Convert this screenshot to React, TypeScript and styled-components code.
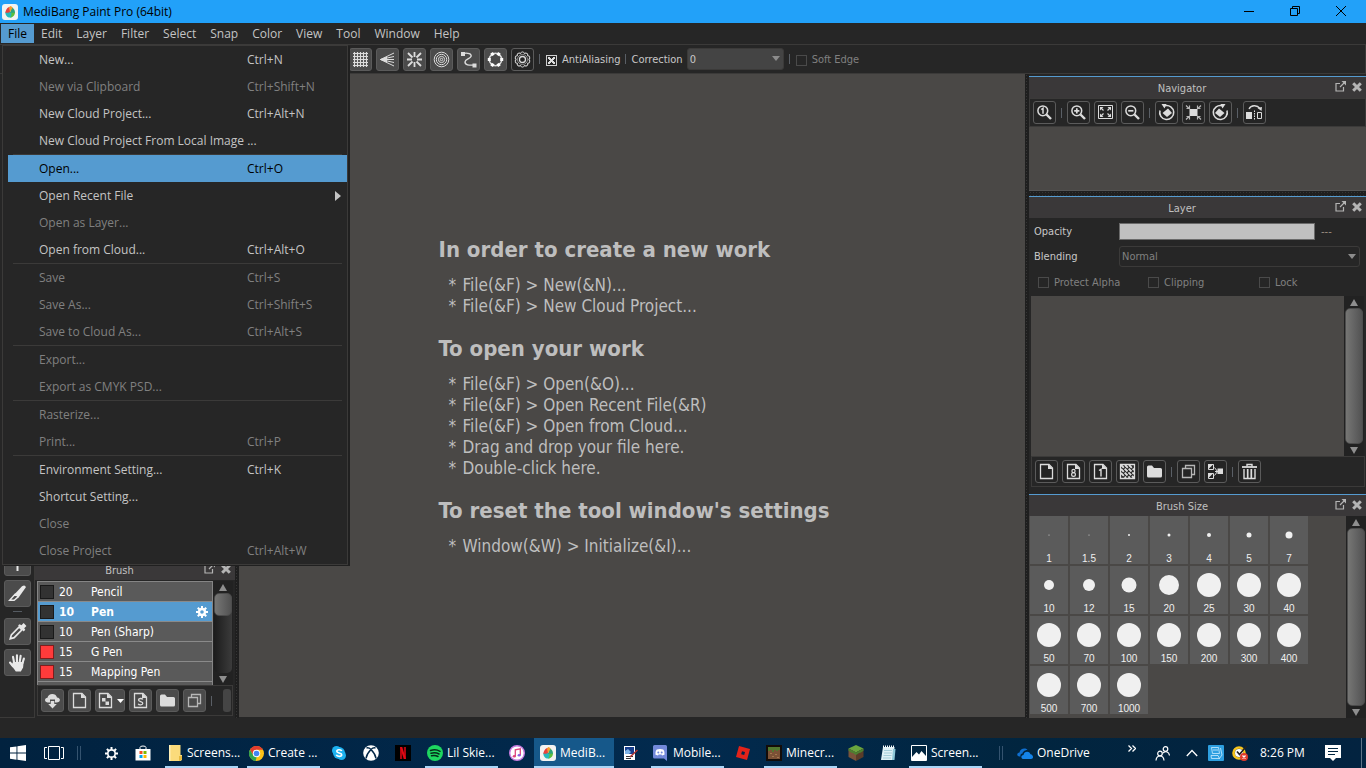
import React from "react";
import styled, { createGlobalStyle, css } from "styled-components";

const UI = `"Open Sans", "Noto Sans", sans-serif`;
const TAHOMA = `"DejaVu Sans Condensed", "DejaVu Sans", sans-serif`;
const BG = "#262626";
const CANVAS = "#4a4846";
const LINE = "#3b3a39";
const BLUE = "#559bd0";

const Global = createGlobalStyle`
  *, *::before, *::after { box-sizing: border-box; }
  html, body, #root { height: 100%; }
  body { margin: 0; overflow: hidden; background: ${BG}; color: #c4c4c4; font: 12px/16px ${UI}; }
  button { font: inherit; color: inherit; margin: 0; padding: 0; border: 0; background: none; white-space: nowrap; }
  svg { display: block; flex: none; }
  ul, h1, h2 { margin: 0; padding: 0; list-style: none; }
`;

const Screen = styled.div`
  display: flex;
  flex-direction: column;
  height: 100vh;
`;

/* ---------- title bar ---------- */
const TitleBar = styled.header`
  display: flex;
  align-items: center;
  height: 23px;
  padding: 0 2px;
  background: #22a1f9;
  color: #000;
`;
const Title = styled.h1`
  flex: 1;
  margin-left: 5px;
  font-size: 12px;
  font-weight: 400;
`;
const WindowButton = styled.button`
  display: grid;
  place-items: center;
  width: 46px;
  height: 21px;
  padding-bottom: 1px;
`;

/* ---------- menu ---------- */
const MenuBar = styled.nav`
  position: relative;
  display: flex;
  height: 21px;
  padding: 1px 0 1px 1px;
`;
const MenuTitle = styled.button<{ $open?: boolean }>`
  height: 19px;
  padding: 0 7px;
  background: ${(p) => (p.$open ? BLUE : "transparent")};
  color: ${(p) => (p.$open ? "#000" : "#c4c4c4")};
`;
const MenuPanel = styled.div`
  position: absolute;
  z-index: 5;
  top: 22px;
  left: 2px;
  width: 346px;
  padding: 0 0 0 5px;
  border: 1px solid ${LINE};
  background: ${BG};
  box-shadow: 2px 1px 0 #202020;
`;
const MenuRow = styled.button<{ $active?: boolean }>`
  display: grid;
  grid-template-columns: 208px 1fr 12px;
  align-items: center;
  width: 100%;
  height: 27px;
  padding: 0 0 0 31px;
  text-align: left;
  color: #c4c4c4;
  &:disabled { color: #808080; }
  ${(p) => p.$active && css`background: ${BLUE}; color: #000;`}
`;
const MenuRule = styled.hr`
  height: 1px;
  margin: 0 5px;
  border: 0;
  background: ${LINE};
`;

/* ---------- toolbars ---------- */
const ToolStrip = styled.div<{ $offset?: boolean; $height?: number }>`
  display: flex;
  align-items: center;
  gap: 4px;
  height: ${(p) => p.$height ?? 30}px;
  padding-left: ${(p) => (p.$offset ? 349 : 3)}px;
  border: 1px solid ${LINE};
  border-left-width: ${(p) => (p.$offset ? 0 : 1)}px;
  overflow: hidden;
  font: 11px/14px ${TAHOMA};
  label { padding-top: 2px; color: #c8c8c8; }
`;
const IconButton = styled.button<{ $filled?: boolean; $wide?: boolean }>`
  display: flex;
  align-items: center;
  justify-content: center;
  gap: 3px;
  flex: none;
  width: ${(p) => (p.$wide ? 30 : 23)}px;
  height: 23px;
  border: 1px solid #5b5b5b;
  border-radius: 3px;
  background: ${(p) => (p.$filled ? "#4b4b4b" : "#242424")};
  color: #dcdcdc;
`;
const Divider = styled.span`
  flex: none;
  width: 3px;
  height: 10px;
  background: linear-gradient(90deg, transparent 1px, #5a5f66 1px, #5a5f66 2px, transparent 2px);
`;
const StripHandle = styled.span`
  width: 8px;
  height: 23px;
  margin: 0 1px 0 auto;
  border-radius: 3px;
  background: #454545;
`;
const Check = styled.label<{ $muted?: boolean }>`
  display: flex;
  align-items: center;
  gap: 5px;
  margin-left: 1px;
  && { color: ${(p) => (p.$muted ? "#808080" : "#c8c8c8")}; }
  font: 11px/14px ${TAHOMA};
  white-space: nowrap;
  input {
    appearance: none;
    flex: none;
    width: 11px;
    height: 11px;
    margin: 0;
    border: 1px solid #4a4a4a;
  }
  input:checked {
    border-color: #d0d0d0;
    background:
      linear-gradient(45deg, transparent 42%, #ddd 42%, #ddd 58%, transparent 58%) center / 7px 7px no-repeat,
      linear-gradient(-45deg, transparent 42%, #ddd 42%, #ddd 58%, transparent 58%) center / 7px 7px no-repeat;
  }
`;
const SelectBox = styled.div<{ $filled?: boolean }>`
  position: relative;
  flex: ${(p) => (p.$filled ? "0 0 97px" : "1")};
  select {
    appearance: none;
    display: block;
    width: 100%;
    height: ${(p) => (p.$filled ? 22 : 21)}px;
    padding: 1px 2px 0;
    border: 1px solid ${LINE};
    border-radius: 3px;
    background: ${(p) => (p.$filled ? "#444" : BG)};
    color: ${(p) => (p.$filled ? "#c8c8c8" : "#808080")};
    opacity: 1;
    font: 11px/14px ${TAHOMA};
  }
  svg { position: absolute; right: 4px; top: 8px; pointer-events: none; }
`;

/* ---------- workspace ---------- */
const Workspace = styled.div`
  display: flex;
  flex: 1;
  min-height: 0;
`;
const ToolColumn = styled.div`
  display: flex;
  flex-direction: column;
  align-items: center;
  justify-content: flex-end;
  gap: 4px;
  width: 35px;
  padding-bottom: 41px;
  border-right: 1px solid ${LINE};
  border-bottom: 1px solid ${LINE};
`;
const ToolButton = styled.button`
  display: grid;
  place-items: center;
  width: 27px;
  height: 27px;
  border: 1px solid #5b5b5b;
  border-radius: 3px;
  background: #4b4b4b;
  color: #e8e8e8;
`;
const ToolRule = styled.span`
  width: 9px;
  height: 3px;
  border-top: 1px solid #555b62;
`;
const BrushPanel = styled.section`
  display: flex;
  flex-direction: column;
  justify-content: flex-end;
  width: 200px;
`;
const BrushBody = styled.div`
  padding: 1px 2px 2px;
`;
const Splitter = styled.div<{ $horizontal?: boolean }>`
  flex: none;
  width: ${(p) => (p.$horizontal ? "auto" : "4px")};
  height: ${(p) => (p.$horizontal ? "5px" : "auto")};
  background: radial-gradient(circle, #353535 1px, #1f1f1f 1px) 0 0 / 3px 3px;
`;
const PanelHeader = styled.div<{ $accent?: boolean }>`
  display: grid;
  grid-template-columns: 1fr 31px;
  flex: none;
  height: 22px;
  border-top: 1px solid ${(p) => (p.$accent ? BLUE : LINE)};
  background: #3a3839;
  h2 { padding-top: 5px; text-align: center; font: 11px/14px ${TAHOMA}; color: #c0c0c0; }
`;
const HeaderActions = styled.div`
  display: flex;
  gap: 6px;
  height: 19px;
  color: #b4b4b4;
`;
const BrushArea = styled.div`
  display: flex;
  height: 104px;
`;
const BrushList = styled.ul`
  flex: 1;
  overflow: hidden;
  border: 1px solid #858585;
  border-bottom: 0;
`;
const BrushRow = styled.button<{ $active?: boolean }>`
  display: grid;
  grid-template-columns: 14px 27px 1fr 14px;
  align-items: center;
  column-gap: 5px;
  width: 100%;
  height: 20px;
  padding: 0 2px;
  border-bottom: 1px solid #8a8a8a;
  background: ${(p) => (p.$active ? BLUE : "#5a5a5a")};
  color: #fff;
  text-align: left;
  font: ${(p) => (p.$active ? 700 : 400)} 12px/16px ${TAHOMA};
`;
const Swatch = styled.i<{ $color: string }>`
  width: 14px;
  height: 14px;
  border: 1px solid rgba(0, 0, 0, 0.5);
  background: ${(p) => p.$color};
`;

const CanvasArea = styled.main`
  display: flex;
  align-items: center;
  justify-content: center;
  flex: 1;
  min-width: 0;
  margin-bottom: 1px;
  padding: 2px 0 0 4px;
  background: ${CANVAS};
  color: #bebebe;
  font-family: ${TAHOMA};
`;
const HelpBlock = styled.section`
  & + & { margin-top: 18px; }
  h2 { font-size: 22px; line-height: 28px; margin-bottom: 11px; }
  li { display: grid; grid-template-columns: 14px 1fr; padding-left: 10px; font-size: 17px; line-height: 21px; }
`;

const RightDock = styled.aside`
  display: flex;
  flex-direction: column;
  width: 337px;
  padding-top: 2px;
`;
const NavigatorView = styled.div`
  flex: 0 0 64px;
  border-bottom: 1px solid #555;
  background: ${CANVAS};
`;
const LayerPanel = styled.section`
  display: flex;
  flex-direction: column;
  flex: 1;
  min-height: 0;
`;
const Field = styled.div`
  display: flex;
  align-items: center;
  height: 25px;
  padding: 0 6px 0 5px;
  font: 11px/14px ${TAHOMA};
  label { width: 85px; color: #c8c8c8; }
`;
const LayerFields = styled.div`
  padding-top: 1px;
`;
const OpacityBar = styled.input`
  appearance: none;
  flex: 0 1 196px;
  min-width: 0;
  height: 17px;
  margin: 0 6px 0 0;
  border: 1px solid #6a6a6a;
  background: #c0c0c0;
  &::-webkit-slider-thumb { appearance: none; width: 0; height: 15px; }
`;
const Dashes = styled.span`
  color: #9d8f82;
`;
const CheckRow = styled.div`
  display: grid;
  grid-template-columns: 110px 111px 1fr;
  height: 27px;
  padding-left: 8px;
`;
const LayerListArea = styled.div`
  display: flex;
  flex: 1;
  min-height: 0;
  margin: 0 2px;
`;
const LayerList = styled.div`
  flex: 1;
  background: ${CANVAS};
`;
const LayerTools = styled.div`
  margin: 0 1px 7px 2px;
`;
const SizeArea = styled.div`
  display: flex;
  height: 202px;
`;
const SizeGrid = styled.div`
  display: grid;
  grid-template-columns: repeat(auto-fill, 38px);
  grid-auto-rows: 48px;
  align-content: start;
  gap: 2px;
  flex: 1;
  padding: 0 36px 0 1px;
  background: ${CANVAS};
`;
const SizeCell = styled.button`
  display: grid;
  grid-template-rows: 38px 10px;
  justify-items: center;
  align-items: center;
  background: #5b5b5b;
  color: #f0f0f0;
  font: 10px/10px "Liberation Sans", sans-serif;
  span { align-self: end; }
`;

/* ---------- scroll bar ---------- */
const ScrollTrack = styled.div`
  display: flex;
  flex-direction: column;
  align-items: center;
  flex: none;
  width: 20px;
  background: #222;
  color: #8f8f8f;
`;
const ScrollSlot = styled.div`
  flex: 1;
  width: 18px;
  border-radius: 5px;
  background: linear-gradient(90deg, #1c1c1c, #3b3b3b);
`;
const ScrollThumb = styled.div<{ $short?: boolean }>`
  height: ${(p) => (p.$short ? "23px" : "100%")};
  border: 1px solid #4c4c4c;
  border-radius: 5px;
  background: linear-gradient(90deg, #767674, #646464 50%, #525252);
`;
const ScrollEnd = styled.button`
  display: grid;
  place-items: center;
  width: 20px;
  height: 12px;
`;

/* ---------- bottom ---------- */
const StatusBar = styled.footer`
  height: 20px;
`;
const TaskBar = styled.footer`
  display: flex;
  align-items: stretch;
  height: 30px;
  background: linear-gradient(90deg, #01223f, #022a4e 50%, #01253f 75%, #032340);
  color: #fff;
`;
const TaskIcon = styled.button<{ $width?: number; $raised?: boolean }>`
  display: grid;
  place-items: center;
  flex: none;
  width: ${(p) => p.$width ?? 32}px;
  padding-bottom: ${(p) => (p.$raised ? 10 : 0)}px;
`;
const TaskApp = styled.button<{ $active?: boolean; $gap?: number }>`
  display: flex;
  align-items: center;
  gap: 4px;
  flex: none;
  width: 80px;
  margin-left: ${(p) => p.$gap ?? 1}px;
  padding: 0 0 0 6px;
  background: ${(p) => (p.$active ? "#16588a" : "transparent")};
  background-image: linear-gradient(#a9d5f7, #a9d5f7);
  background-repeat: no-repeat;
  background-size: ${(p) => (p.$active ? "100%" : "73px")} 2px;
  background-position: 50% 100%;
  overflow: hidden;
`;
const TaskDivider = styled.span<{ $before: number; $after: number }>`
  flex: none;
  align-self: center;
  width: 4px;
  height: 14px;
  margin: 0 ${(p) => p.$after}px 0 ${(p) => p.$before}px;
  border: solid #34536f;
  border-width: 0 1px;
`;
const OneDrive = styled.button`
  display: flex;
  align-items: center;
  gap: 4px;
`;
const Tray = styled.div`
  display: flex;
  margin-left: auto;
`;
const Clock = styled.time`
  align-self: center;
  width: 53px;
  padding-left: 8px;
  white-space: nowrap;
`;
const ShowDesktop = styled.button`
  width: 5px;
  border-left: 1px solid #5d7387;
`;

/* ---------- icons ---------- */
type G = { children: React.ReactNode; s?: number; vb?: number };
const Ico = ({ children, s = 17, vb = 17 }: G) => (
  <svg width={s} height={s} viewBox={`0 0 ${vb} ${vb}`} fill="none" stroke="currentColor" aria-hidden="true">
    {children}
  </svg>
);
const GridIcon = () => (
  <Ico><path strokeWidth="1.200" d="M2.500 1v15M5.500 1v15M8.500 1v15M11.500 1v15M14.500 1v15M1 2.500h15M1 5.500h15M1 8.500h15M1 11.500h15M1 14.500h15" /></Ico>
);
const VanishIcon = () => (
  <Ico><path d="M1.500 8.500L15 2M1.500 8.500L15 5.500M1.500 8.500H15M1.500 8.500L15 11.500M1.500 8.500L15 15" /><path fill="currentColor" stroke="none" d="M1 8.500l7-3v6z" /></Ico>
);
const RadialIcon = () => (
  <Ico><path strokeWidth="1.800" d="M8.500 1v5M8.500 11v5M1 8.500h5M11 8.500h5M2 2l4.500 4.500M10.500 10.500L15 15M15 2l-4.500 4.500M6.500 10.500L2 15" /></Ico>
);
const RingsIcon = () => (
  <Ico><circle cx="8.5" cy="8.5" r="7.3" /><circle cx="8.5" cy="8.5" r="5.2" /><circle cx="8.5" cy="8.5" r="3.1" /><circle cx="8.5" cy="8.5" r="1.2" /></Ico>
);
const CurveIcon = () => (
  <Ico><path strokeWidth="1.400" d="M3 2.500c5-1 9 .5 8 3S5 8 5 11s4 3.500 9 3" /><path fill="currentColor" stroke="none" d="M1 1h4v4H1zM12.500 12.500h4v4h-4z" /></Ico>
);
const NodesIcon = () => (
  <Ico>
    <circle cx="8.5" cy="8.5" r="6.2" strokeWidth="1.500" />
    {[30, 90, 150, 210, 270, 330].map((a) => (
      <rect key={a} x="7" y="0.8" width="3" height="3" fill="#fff" stroke="none" transform={`rotate(${a} 8.5 8.5)`} />
    ))}
  </Ico>
);
const CogOutline = () => (
  <Ico>
    {[0, 36, 72, 108, 144, 180, 216, 252, 288, 324].map((a) => (
      <path key={a} d="M6.600 2.600C6.800.4 10.200.4 10.400 2.600" transform={`rotate(${a} 8.500 8.500)`} />
    ))}
    <circle cx="8.5" cy="8.5" r="5" stroke="#8f8f8f" /><circle cx="8.5" cy="8.5" r="3" strokeWidth="1.300" />
  </Ico>
);
const Lens = ({ kind }: { kind: "1" | "+" | "-" }) => (
  <Ico>
    <circle cx="6.800" cy="6.800" r="4.900" strokeWidth="1.500" />
    <path strokeWidth="2.400" d="M10.500 10.500l4.500 4.500" />
    {kind === "1" ? <path strokeWidth="1.500" d="M5.300 5.600l1.700-1.300v5.400" /> : <path strokeWidth="1.700" d={kind === "+" ? "M4.200 6.800h5.200M6.800 4.200v5.200" : "M4.200 6.800h5.200"} />}
  </Ico>
);
const FitIcon = () => (
  <Ico><path d="M1.500 1.500h14v13h-14z" /><path fill="currentColor" stroke="none" d="M3 3h3.500L3 6.500zM14 3v3.500L10.500 3zM3 13V9.500L6.500 13zM14 13h-3.500L14 9.500z" /><path strokeWidth="1.200" d="M4 4l2.500 2.500M13 4l-2.500 2.500M4 12l2.500-2.500M13 12l-2.500-2.500" /></Ico>
);
const RotateIcon = ({ flip }: { flip?: boolean }) => (
  <Ico>
    <g transform={flip ? "matrix(-1 0 0 1 17 0)" : undefined}>
      <path strokeWidth="1.600" d="M2 6.500a7 7 0 1 0 5-4.800" />
      <path fill="currentColor" stroke="none" d="M8.500 0L3.500 0 6.500 4.500zM10 4.500l4 4.500-5 4-4.500-4z" />
    </g>
  </Ico>
);
const ResetIcon = () => (
  <Ico><path fill="currentColor" stroke="none" d="M4.500 5h8v7h-8z" /><path strokeWidth="1.200" stroke="#b8b8b8" d="M1 1.500l3 3M16 1.500l-3 3M1 15.500l3-3M16 15.500l-3-3M1.500 4.500h3v-3M12.500 1.500v3h3M1.500 12.500h3v3M12.500 15.500v-3h3" /></Ico>
);
const FlipIcon = () => (
  <Ico><path fill="currentColor" stroke="none" d="M0 8h6v7H0zM11.500 4l4.500-1-.5 4z" /><path d="M11.500 8.500h4v6h-4z" /><path strokeDasharray="1.500 1" d="M8.500 6.500V16" /><path strokeWidth="1.300" d="M3 5C5 1 11 .500 14 4.500" /></Ico>
);
const PageIcon = ({ mark }: { mark?: "8" | "1" | "S" | "check" }) => (
  <Ico>
    <path strokeWidth="1.300" d="M2.500 1.500h8.500l3.500 3.500v10.500h-12z" />
    <path fill="currentColor" stroke="none" d="M10 1l5 5h-5z" />
    {mark === "8" && <><circle cx="8.500" cy="8" r="1.600" strokeWidth="1.200" /><circle cx="8.500" cy="11.500" r="1.900" strokeWidth="1.200" /></>}
    {mark === "1" && <path strokeWidth="1.400" d="M7 7.500L9 6.300V13.500" />}
    {mark === "S" && <path strokeWidth="1.300" d="M10.800 7.500C10 6 6.400 6.200 6.500 8s4.400 1.300 4.300 3.200S7 13.500 6.200 11.700" />}
    {mark === "check" && <path fill="currentColor" stroke="none" d="M5 6h3.500v3.500H5zM8.500 9.500H12V13H8.500z" />}
  </Ico>
);
const HatchIcon = () => (
  <Ico>
    <path strokeWidth="1.300" d="M1.500 1.500h14v14h-14z" />
    <path strokeWidth="1.900" strokeDasharray="4 1.200" d="M2 6l9 9M2 2l13 13M6 2l9 9M10 2l5 5M2 10l5 5" />
  </Ico>
);
const FolderIcon = () => (
  <Ico><path fill="currentColor" stroke="none" d="M1 4q0-1.500 1.500-1.500H6L8 5h6.500Q16 5 16 6.500V13q0 1.500-1.500 1.500h-12Q1 14.500 1 13z" /></Ico>
);
const CopyIcon = () => (
  <Ico><path strokeWidth="1.300" stroke="#b6b6b6" d="M2.500 5.500h9v9h-9zM5.500 5V2.500h9v9H12" /></Ico>
);
const MergeIcon = () => (
  <Ico><path fill="currentColor" stroke="none" d="M10.500 5.500H16v5.500h-5.500zM1 1h5.500L1 6.500zM1 10h5.500L1 15.500z" /><path d="M1.500 1.500h5v5h-5zM1.500 10.500h5v5h-5zM7.500 4.500l3 4-3 4M8 8.500h3" /></Ico>
);
const TrashIcon = () => (
  <Ico><path strokeWidth="1.800" d="M1 4h15" /><path strokeWidth="1.400" d="M6 3.500v-2h5v2M3 6v9.500h11V6" /><path strokeWidth="1.700" d="M6.700 6v9M10.300 6v9" /></Ico>
);
const CloudDown = () => (
  <Ico><path fill="currentColor" stroke="none" d="M3.500 10.500C0 10 .5 5.800 3.500 5.800 4 1 12 .5 13 5.500c4 .3 4 5-.5 5H11V7.500H6v3zM6.700 9h3.600v3h2.500l-4.300 4.500L4.200 12h2.500z" /></Ico>
);
const Tri = ({ up }: { up?: boolean }) => (
  <svg width="8" height="7" viewBox="0 0 8 7" fill="currentColor" aria-hidden="true">
    <path d={up ? "M4 0l4 7H0z" : "M0 0h8L4 7z"} />
  </svg>
);
const DropTri = () => (
  <svg width="8" height="5" viewBox="0 0 8 5" fill="#8c8c8c" aria-hidden="true"><path d="M0 0h8L4 5z" /></svg>
);
const PopOut = () => (
  <Ico s={11} vb={11}><path strokeWidth="1.200" d="M5 2.500H1v7.500h7.500V6M5 6l4.500-4.500" /><path fill="currentColor" stroke="none" d="M6.500 0H11v4.500z" /></Ico>
);
const CloseX = () => (
  <Ico s={10} vb={10}><path strokeWidth="3" d="M1.200 1.200l7.600 7.600M8.800 1.200L1.200 8.800" /></Ico>
);
const MediLogo = ({ s }: { s: number }) => (
  <svg width={s} height={s} viewBox="0 0 16 16" aria-hidden="true">
    <rect width="16" height="16" rx="3" fill="#f3f3f1" />
    <path fill="#24b9bd" d="M3.300 8C3.300 11.500 5.200 13.500 8 13.500s3-2 3-3.500L7 7z" />
    <path fill="#5cbf3a" d="M13 8c0 3.200-2 5.500-5 5.500 2-1.500 1.500-4 1-5.500z" />
    <path fill="#2ca47c" d="M9.500 3C11.500 4 13 6 13 8.500L8 9z" />
    <path fill="#e7423f" d="M3.300 8.500C3.800 7 4.500 3.800 7 3l1.500.5L8 8C6 9 4.300 9 3.300 8.500z" />
    <path fill="#f6a02d" d="M8 2c1.500.3 2.500 1 2.500 2L8 8 7 4z" />
  </svg>
);
const BrushGear = () => (
  <Ico s={12} vb={12}>
    <circle cx="6" cy="6" r="3" strokeWidth="2.400" stroke="#fff" />
    {[0, 45, 90, 135].map((a) => <path key={a} stroke="#fff" strokeWidth="2" d="M6 0v2.500M6 9.500V12" transform={`rotate(${a} 6 6)`} />)}
  </Ico>
);

/* ---------- data ---------- */
const menus = ["File", "Edit", "Layer", "Filter", "Select", "Snap", "Color", "View", "Tool", "Window", "Help"];
type Entry = { label: string; keys?: string; off?: boolean; active?: boolean; sub?: boolean };
const fileMenu: Entry[][] = [
  [
    { label: "New...", keys: "Ctrl+N" },
    { label: "New via Clipboard", keys: "Ctrl+Shift+N", off: true },
    { label: "New Cloud Project...", keys: "Ctrl+Alt+N" },
    { label: "New Cloud Project From Local Image ..." },
  ],
  [
    { label: "Open...", keys: "Ctrl+O", active: true },
    { label: "Open Recent File", sub: true },
    { label: "Open as Layer...", off: true },
    { label: "Open from Cloud...", keys: "Ctrl+Alt+O" },
  ],
  [
    { label: "Save", keys: "Ctrl+S", off: true },
    { label: "Save As...", keys: "Ctrl+Shift+S", off: true },
    { label: "Save to Cloud As...", keys: "Ctrl+Alt+S", off: true },
  ],
  [{ label: "Export...", off: true }, { label: "Export as CMYK PSD...", off: true }],
  [{ label: "Rasterize...", off: true }, { label: "Print...", keys: "Ctrl+P", off: true }],
  [
    { label: "Environment Setting...", keys: "Ctrl+K" },
    { label: "Shortcut Setting..." },
    { label: "Close", off: true },
    { label: "Close Project", keys: "Ctrl+Alt+W", off: true },
  ],
];
const brushes = [
  { size: 20, name: "Pencil", color: "#323232" },
  { size: 10, name: "Pen", color: "#323232", active: true },
  { size: 10, name: "Pen (Sharp)", color: "#323232" },
  { size: 15, name: "G Pen", color: "#ff3b3b" },
  { size: 15, name: "Mapping Pen", color: "#ff3b3b" },
  { size: 15, name: "", color: "#0a6a0a" },
];
const sizes: [string, number][] = [
  ["1", 1], ["1.5", 1], ["2", 2], ["3", 3], ["4", 4], ["5", 5], ["7", 7],
  ["10", 10], ["12", 12], ["15", 15], ["20", 20], ["25", 24], ["30", 24], ["40", 24],
  ["50", 24], ["70", 24], ["100", 24], ["150", 24], ["200", 24], ["300", 24], ["400", 24],
  ["500", 24], ["700", 24], ["1000", 24],
];
const help = [
  { title: "In order to create a new work", lines: ["File(&F) > New(&N)...", "File(&F) > New Cloud Project..."] },
  {
    title: "To open your work",
    lines: ["File(&F) > Open(&O)...", "File(&F) > Open Recent File(&R)", "File(&F) > Open from Cloud...", "Drag and drop your file here.", "Double-click here."],
  },
  { title: "To reset the tool window's settings", lines: ["Window(&W) > Initialize(&I)..."] },
];

/* ---------- pieces ---------- */
const Header = ({ title, accent }: { title: string; accent?: boolean }) => (
  <PanelHeader $accent={accent}>
    <h2>{title}</h2>
    <HeaderActions>
      <button aria-label={`Float ${title}`}><PopOut /></button>
      <button aria-label={`Close ${title}`}><CloseX /></button>
    </HeaderActions>
  </PanelHeader>
);
const Scroll = ({ short }: { short?: boolean }) => (
  <ScrollTrack>
    <ScrollEnd aria-label="Scroll up"><Tri up /></ScrollEnd>
    <ScrollSlot><ScrollThumb $short={short} /></ScrollSlot>
    <ScrollEnd aria-label="Scroll down"><Tri /></ScrollEnd>
  </ScrollTrack>
);
type Tool = [string, React.ReactNode] | null;
const Tools = ({ items, filled }: { items: Tool[]; filled?: boolean }) => (
  <>
    {items.map((t, i) => (t ? <IconButton key={i} $filled={filled} aria-label={t[0]}>{t[1]}</IconButton> : <Divider key={i} />))}
  </>
);

const Svg = ({ children, w = 16, h = 16 }: { children: React.ReactNode; w?: number; h?: number }) => (
  <svg width={w} height={h} viewBox={`0 0 ${w} ${h}`} fill="none" aria-hidden="true">{children}</svg>
);

const StartIcon = () => <Svg><path fill="#fff" d="M0 2.300L6.500 1.400v6.200H0zM7.400 1.300L16 0v7.600H7.400zM0 8.500h6.500v6.200L0 13.800zM7.400 8.500H16V16l-8.600-1.200z" /></Svg>;
const TaskViewIcon = () => <Svg w={20} h={14}><path stroke="#fff" d="M4.500.5h11v13h-11zM3 1.500H.5v11H3M17 1.500h2.500v11H17" /></Svg>;
const SettingsIcon = () => (
  <Svg w={13} h={13}>
    <circle cx="6.500" cy="6.500" r="3.700" stroke="#fff" strokeWidth="1.700" />
    {[0, 45, 90, 135].map((a) => <path key={a} stroke="#fff" strokeWidth="2" d="M6.500 0v2.500M6.500 10.500V13" transform={`rotate(${a} 6.5 6.5)`} />)}
  </Svg>
);
const StoreIcon = () => (
  <Svg><path stroke="#fff" d="M5 5V2.500Q5 1 8 1t3 1.500V5" /><path fill="#fff" d="M.5 4h15v11.500H.5z" /><path fill="#f25022" d="M4.500 6h3v3h-3z" /><path fill="#7fba00" d="M8.500 6h3v3h-3z" /><path fill="#00a4ef" d="M4.500 10h3v3h-3z" /><path fill="#ffb900" d="M8.500 10h3v3h-3z" /></Svg>
);
const FilesIcon = () => <Svg><path fill="#fbdb7b" d="M2 0h11.500v10H15v5l-1.500 1H2z" /><path fill="#e6b93f" d="M12 11h3v3.500L12 16z" /><path fill="#fff0b8" d="M2 0h1.500v16H2z" /></Svg>;
const ChromeIcon = () => (
  <Svg w={15} h={15}><circle cx="7.500" cy="7.500" r="7.500" fill="#fbc116" /><path fill="#e33b2e" d="M1 3.700A7.500 7.500 0 0 1 14 3.800H7.500L4.200 9.300z" /><path fill="#31a350" d="M1 3.700l3.300 5.700 3.400 1.800L6.500 15A7.500 7.500 0 0 1 1 3.700z" /><circle cx="7.500" cy="7.500" r="3.700" fill="#fff" /><circle cx="7.500" cy="7.500" r="2.800" fill="#4285f4" /></Svg>
);
const SkypeIcon = () => (
  <Svg w={14} h={14}><circle cx="4.500" cy="4.500" r="4.500" fill="#1db2f0" /><circle cx="9.500" cy="9.500" r="4.500" fill="#1db2f0" /><circle cx="7" cy="7" r="6" fill="#1db2f0" /><path stroke="#fff" strokeWidth="1.700" d="M9.700 5C9 3.300 4.800 3.300 4.800 5.300S9.700 6.600 9.700 8.800 5 10.700 4.300 8.800" /></Svg>
);
const XboxIcon = () => (
  <Svg>
    <circle cx="8" cy="8" r="7.800" fill="#fff" />
    <path stroke="#022747" strokeWidth="1.500" d="M3.500 3C5.500 2.500 7 3.500 8 4.500 9 3.500 10.500 2.500 12.500 3M8 4.500C5.500 7 3.500 10 3 13.500M8 4.500c2.500 2.500 4.500 5.500 5 9" />
  </Svg>
);
const NetflixIcon = () => <Svg><path fill="#000" d="M0 0h16v16H0z" /><path fill="#b1060f" d="M5 2h2.200v12H5zM8.800 2H11v12H8.800z" /><path fill="#e50914" d="M5 2h2.200L11 14H8.800z" /></Svg>;
const SpotifyIcon = () => <Svg><circle cx="8" cy="8" r="8" fill="#1ed760" /><path stroke="#062a1b" strokeLinecap="round" strokeWidth="1.500" d="M3.500 5.500c3-1 7-.7 9.500.8M4 8.200c2.700-.8 5.800-.5 8 .8M4.500 10.800c2.200-.6 4.500-.4 6.500.7" /></Svg>;
const ITunesIcon = () => <Svg><circle cx="8" cy="8" r="7.300" fill="#fff" stroke="#c77be0" strokeWidth="1.400" /><path stroke="#e0457b" strokeWidth="1.300" d="M6.300 11V4.800l5-1v6.200" /><ellipse cx="5.300" cy="11.200" rx="1.600" ry="1.300" fill="#e0457b" /><ellipse cx="10.200" cy="10.200" rx="1.600" ry="1.300" fill="#8c5ce0" /></Svg>;
const EditorIcon = () => <Svg><path fill="#fff" d="M2 1h11v14H2z" /><path fill="#173e8d" d="M3 2h9v7H3z" /><path fill="#7fb4e6" d="M3 6l3-2 3 3-2 2H3z" /><path stroke="#333" d="M4 11.500h7M4 13.500h5" /><path stroke="#b03030" strokeWidth="1.500" d="M15.500 5L8 12" /></Svg>;
const DiscordIcon = () => <Svg><path fill="#7289da" d="M1.500 0h11Q14 0 14 1.500V16l-3-2.500H1.500Q0 13.500 0 12V1.500Q0 0 1.500 0z" /><path fill="#fff" d="M2.500 9.700C2.300 7 3 5 3.800 4.500c2-.8 4.400-.8 6.400 0C11 5 11.700 7 11.500 9.700L9 10.500l-.5-1h-3l-.5 1z" /><circle cx="5.300" cy="7.500" r="1" fill="#7289da" /><circle cx="8.700" cy="7.500" r="1" fill="#7289da" /></Svg>;
const RobloxIcon = () => <Svg><path fill="#e2231a" d="M4 1l11 3-3 11-11-3z" /><path fill="#03264a" d="M7 6.200l3 .8-.8 3-3-.8z" /></Svg>;
const CraftIcon = () => <Svg><path fill="#130c08" d="M0 0h16v16H0z" /><path fill="#7b5236" d="M2 2h12v12H2z" /><path fill="#50782f" d="M2 2h12v3h-2v1h-2V5H8v2H6V5H4v1H2z" /><path fill="#a3764e" d="M4 8h2v1H4zM9 9h2v1H9zM6 11h2v1H6zM11 12h2v1h-2z" /></Svg>;
const GrassIcon = () => <Svg><path fill="#6aa63e" d="M8 0l7.500 3.500L8 7.500.5 3.500z" /><path fill="#79533a" d="M.5 3.500L8 7.500V16L.5 12z" /><path fill="#5a3c29" d="M15.500 3.500L8 7.500V16l7.500-4z" /><path fill="#4d8030" d="M.5 3.500L8 7.500l7.500-4v2.200L13 7.500 11 8l-3 2-3-2-2-.5-2.500-2z" /></Svg>;
const NotepadIcon = () => <Svg><path fill="#dff1f5" d="M3 2h11.500l-1 13H1z" /><path fill="#8ec7d6" d="M13 4h2.500l-1 11H12z" /><path stroke="#a5cdd8" d="M4 5.500h8M4 8h8M3.500 10.500h8M3 13h8" /><path stroke="#fff" strokeDasharray="1 1" strokeWidth="2" d="M3 1.500h11" /></Svg>;
const PhotosIcon = () => <Svg><path stroke="#fff" fill="#01253f" d="M.5.5h15v15H.5z" /><path fill="#fff" d="M1 12l4.500-5L8 9.500 10.500 6 15 11v4.500H1z" /></Svg>;
const OneDriveIcon = () => <Svg w={16} h={11}><path fill="#0f6fd0" d="M2.500 8.500C-1 8 0 4.500 2.500 4.500 3 1 8-1 10.500 2 7 2 5.500 4.500 5.500 5.500 3.500 6 3.200 7 3.500 8.500z" /><path fill="#1484ea" d="M6 11c-2.500-.5-2-4 .5-4 .3-4 6-4.500 7-.8C16.500 6.500 17 11 14 11z" /></Svg>;
const PeopleIcon = () => <Svg w={15} h={15}><g stroke="#fff" strokeWidth="1.200"><circle cx="10.500" cy="3" r="2.300" /><circle cx="5" cy="7.500" r="2.300" /><path d="M1 14.500c.5-6 7.500-6 8 0M8 7c3-2.500 6-1 6.500 2.500" /></g></Svg>;
const CaretIcon = () => <Svg w={12} h={8}><path stroke="#fff" strokeWidth="1.300" d="M.8 7L6 1.500 11.200 7" /></Svg>;
const MonitorIcon = () => <Svg><rect width="16" height="16" rx="1" fill="#2d9fe0" /><path stroke="#cdeeff" strokeWidth=".8" d="M3.500 2.500h7l1 6h-7zM5 5h5M3 10.500h7l1.500 3H3.500zM12.500 3l1.500 7-3 4" /></Svg>;
const NortonIcon = () => <Svg><circle cx="7" cy="8" r="5.500" stroke="#f5c31c" strokeWidth="2.600" /><circle cx="7" cy="8" r="4" fill="#fff" /><path stroke="#222" strokeWidth="1.700" d="M5 6.500l2.500 3L14.500 1" /><circle cx="12" cy="12" r="4" fill="#e03a2b" /><path stroke="#fff" strokeWidth="1.300" d="M10.500 10.500l3 3M13.500 10.500l-3 3" /></Svg>;
const ActionIcon = () => <Svg w={16} h={16}><path fill="#fff" d="M0 0h16v13H11l-3 3-3-3H0z" /><path stroke="#01253f" d="M3 3.500h10M3 6.500h10M3 9.500h7" /></Svg>;

export default function App() {
  return (
    <Screen>
      <Global />
      <TitleBar>
        <MediLogo s={16} />
        <Title>MediBang Paint Pro (64bit)</Title>
        <WindowButton aria-label="Minimize"><Svg w={10} h={10}><path stroke="#000" d="M0 5.500h10" /></Svg></WindowButton>
        <WindowButton aria-label="Restore"><Svg w={10} h={10}><path stroke="#000" d="M.5 2.500h7v7h-7zM2.500 2.500v-2h7v7h-2" /></Svg></WindowButton>
        <WindowButton aria-label="Close"><Svg w={10} h={10}><path stroke="#000" d="M0 0l10 10M10 0L0 10" /></Svg></WindowButton>
      </TitleBar>

      <MenuBar>
        {menus.map((m) => <MenuTitle key={m} $open={m === "File"}>{m}</MenuTitle>)}
        <MenuPanel role="menu">
          {fileMenu.map((group, g) => (
            <React.Fragment key={g}>
              {g > 0 && <MenuRule />}
              {group.map((e) => (
                <MenuRow key={e.label} role="menuitem" disabled={e.off} $active={e.active}>
                  <span>{e.label}</span>
                  <span>{e.keys}</span>
                  {e.sub && <Svg w={6} h={10}><path fill="#c4c4c4" d="M0 0l6 5-6 5z" /></Svg>}
                </MenuRow>
              ))}
            </React.Fragment>
          ))}
        </MenuPanel>
      </MenuBar>

      <ToolStrip $offset>
        <Tools filled items={[["Grid snap", <GridIcon />], ["Vanishing snap", <VanishIcon />], ["Radial snap", <RadialIcon />], ["Circle snap", <RingsIcon />], ["Curve snap", <CurveIcon />], ["Ellipse snap", <NodesIcon />]]} />
        <Tools items={[["Snap settings", <CogOutline />], null]} />
        <Check><input type="checkbox" defaultChecked />AntiAliasing</Check>
        <Divider />
        <label htmlFor="correction">Correction</label>
        <SelectBox $filled><select id="correction"><option>0</option></select><DropTri /></SelectBox>
        <Divider />
        <Check $muted><input type="checkbox" disabled />Soft Edge</Check>
      </ToolStrip>

      <Workspace>
        <ToolColumn>
          <ToolButton aria-label="Wand"><Ico><path strokeWidth="2" d="M8.500 8v9" /></Ico></ToolButton>
          <ToolButton aria-label="Eraser"><Ico s={19}><path strokeWidth="1.300" d="M1.500 14.500L6.500 9 9 11.500l-3.500 3z" /><path fill="currentColor" stroke="none" d="M6.500 8.500L12.500 2q3-1.500 3.500 1L9.500 12z" /></Ico></ToolButton>
          <ToolRule />
          <ToolButton aria-label="Eyedropper"><Ico s={19}><path strokeWidth="1.500" d="M2 15l1-3.500 7-7L12.500 7l-7 7z" /><path fill="currentColor" stroke="none" d="M9 3l1.500-1 1.500 1 2-2 2.500 2.500-2 2 1 1.500L14 8.500z" /></Ico></ToolButton>
          <ToolButton aria-label="Hand"><Ico s={19}><path stroke="currentColor" strokeLinecap="round" strokeWidth="1.900" d="M5.500 9L4.500 3.500M8 8V2M10.500 8l.8-5.500M13 9l1.200-4M4.500 12L1.800 8.500" /><path fill="currentColor" stroke="none" d="M4.500 8h9.500l-.5 5-2 3.500H7L3 11z" /></Ico></ToolButton>
        </ToolColumn>

        <BrushPanel>
          <Header title="Brush" />
          <BrushBody>
            <BrushArea>
              <BrushList>
                {brushes.map((b, i) => (
                  <li key={i}>
                    <BrushRow $active={b.active}>
                      <Swatch $color={b.color} />
                      <span>{b.name && b.size}</span>
                      <span>{b.name}</span>
                      {b.active && <BrushGear />}
                    </BrushRow>
                  </li>
                ))}
              </BrushList>
              <Scroll short />
            </BrushArea>
            <ToolStrip $height={31}>
              <Tools filled items={[["Cloud brush", <CloudDown />], ["New brush", <PageIcon />]]} />
              <IconButton $filled $wide aria-label="New bitmap brush"><PageIcon mark="check" /><svg width="7" height="4" viewBox="0 0 7 4" fill="#fff"><path d="M0 0h7L3.500 4z" /></svg></IconButton>
              <Tools filled items={[["Script brush", <PageIcon mark="S" />], ["Folder", <FolderIcon />], ["Duplicate", <CopyIcon />], null]} />
              <StripHandle />
            </ToolStrip>
          </BrushBody>
        </BrushPanel>
        <Splitter />

        <CanvasArea>
          <div>
            {help.map((h) => (
              <HelpBlock key={h.title}>
                <h2>{h.title}</h2>
                <ul>{h.lines.map((l) => <li key={l}><span>*</span><span>{l}</span></li>)}</ul>
              </HelpBlock>
            ))}
          </div>
        </CanvasArea>
        <Splitter />

        <RightDock>
          <Header title="Navigator" accent />
          <ToolStrip $height={29}>
            <Tools items={[["Actual size", <Lens kind="1" />], null, ["Zoom in", <Lens kind="+" />], ["Fit", <FitIcon />], ["Zoom out", <Lens kind="-" />], null, ["Rotate left", <RotateIcon />], ["Reset rotation", <ResetIcon />], ["Rotate right", <RotateIcon flip />], null, ["Flip", <FlipIcon />]]} />
          </ToolStrip>
          <NavigatorView />
          <Splitter $horizontal />
          <LayerPanel>
            <Header title="Layer" accent />
            <LayerFields>
              <Field><label htmlFor="opacity">Opacity</label><OpacityBar id="opacity" type="range" disabled /><Dashes>---</Dashes></Field>
              <Field><label htmlFor="blending">Blending</label><SelectBox><select id="blending" disabled><option>Normal</option></select><DropTri /></SelectBox></Field>
            </LayerFields>
            <CheckRow>
              <Check $muted><input type="checkbox" disabled />Protect Alpha</Check>
              <Check $muted><input type="checkbox" disabled />Clipping</Check>
              <Check $muted><input type="checkbox" disabled />Lock</Check>
            </CheckRow>
            <LayerListArea><LayerList /><Scroll /></LayerListArea>
            <LayerTools>
              <ToolStrip $height={31}>
                <Tools items={[["New layer", <PageIcon />], ["New 8bit layer", <PageIcon mark="8" />], ["New 1bit layer", <PageIcon mark="1" />], ["New halftone layer", <HatchIcon />], ["New folder", <FolderIcon />], null, ["Duplicate layer", <CopyIcon />], ["Merge layer", <MergeIcon />], null, ["Delete layer", <TrashIcon />]]} />
              </ToolStrip>
            </LayerTools>
          </LayerPanel>
          <Header title="Brush Size" accent />
          <SizeArea>
            <SizeGrid>
              {sizes.map(([label, d]) => (
                <SizeCell key={label}>
                  <svg width="24" height="24" viewBox="0 0 24 24" aria-hidden="true"><circle cx="12" cy="12" r={d / 2} fill="#f0f0f0" /></svg>
                  <span>{label}</span>
                </SizeCell>
              ))}
            </SizeGrid>
            <Scroll />
          </SizeArea>
        </RightDock>
      </Workspace>
      <StatusBar />

      <TaskBar>
        <TaskIcon $width={36} aria-label="Start"><StartIcon /></TaskIcon>
        <TaskIcon $width={36} aria-label="Task view"><TaskViewIcon /></TaskIcon>
        <TaskDivider $before={5} $after={14} />
        <TaskIcon aria-label="Settings"><SettingsIcon /></TaskIcon>
        <TaskIcon aria-label="Store"><StoreIcon /></TaskIcon>
        <TaskApp $gap={2}><FilesIcon />Screens...</TaskApp>
        <TaskApp $gap={2}><ChromeIcon />Create ...</TaskApp>
        <TaskIcon aria-label="Skype"><SkypeIcon /></TaskIcon>
        <TaskIcon aria-label="Xbox"><XboxIcon /></TaskIcon>
        <TaskIcon aria-label="Netflix"><NetflixIcon /></TaskIcon>
        <TaskApp $gap={2}><SpotifyIcon />Lil Skie...</TaskApp>
        <TaskIcon aria-label="iTunes"><ITunesIcon /></TaskIcon>
        <TaskApp $active><MediLogo s={16} />MediB...</TaskApp>
        <TaskIcon aria-label="Editor"><EditorIcon /></TaskIcon>
        <TaskApp><DiscordIcon />Mobile...</TaskApp>
        <TaskIcon aria-label="Roblox"><RobloxIcon /></TaskIcon>
        <TaskApp><CraftIcon />Minecr...</TaskApp>
        <TaskIcon aria-label="Minecraft"><GrassIcon /></TaskIcon>
        <TaskIcon aria-label="Notepad"><NotepadIcon /></TaskIcon>
        <TaskApp><PhotosIcon />Screen...</TaskApp>
        <TaskDivider $before={14} $after={14} />
        <OneDrive><OneDriveIcon />OneDrive</OneDrive>
        <Tray>
          <TaskIcon $width={24} $raised aria-label="More"><Svg w={8} h={7}><path stroke="#fff" strokeWidth="1.300" d="M.5.5l3 3-3 3M4.500.5l3 3-3 3" /></Svg></TaskIcon>
          <TaskIcon $width={36} aria-label="People"><PeopleIcon /></TaskIcon>
          <TaskIcon $width={24} aria-label="Hidden icons"><CaretIcon /></TaskIcon>
          <TaskIcon $width={24} aria-label="Display"><MonitorIcon /></TaskIcon>
          <TaskIcon $width={24} aria-label="Security"><NortonIcon /></TaskIcon>
          <Clock>8:26 PM</Clock>
          <TaskIcon $width={56} aria-label="Notifications"><ActionIcon /></TaskIcon>
          <ShowDesktop aria-label="Show desktop" />
        </Tray>
      </TaskBar>
    </Screen>
  );
}
